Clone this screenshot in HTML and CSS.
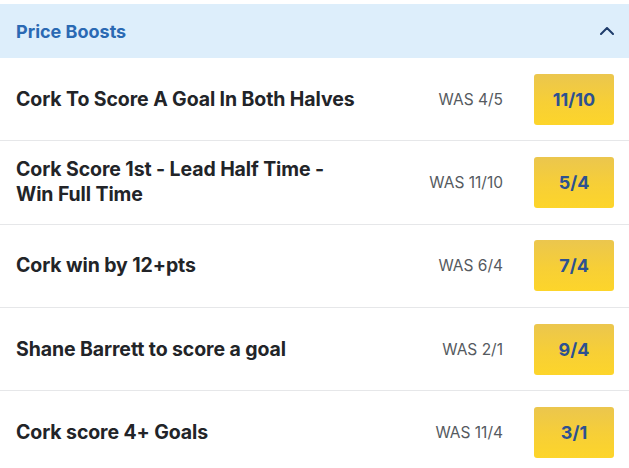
FILE: index.html
```html
<!DOCTYPE html>
<html lang="en">
<head>
<meta charset="utf-8">
<title>Price Boosts</title>
<link rel="stylesheet" href="styles.css">
</head>
<body>
<section class="panel">
  <header class="panel-head">
    <h2 class="panel-title">Price Boosts</h2>
    <svg class="chevron" width="14" height="8" viewBox="0 0 14 8" aria-hidden="true">
      <polyline points="1,7 7,1 13,7" fill="none" stroke="#1f3d6b" stroke-width="2" stroke-linecap="round" stroke-linejoin="round"/>
    </svg>
  </header>
  <ul class="boosts">
    <li class="boost">
      <span class="boost-name">Cork To Score A Goal In Both Halves</span>
      <span class="boost-was">WAS 4/5</span>
      <button class="boost-odds">11/10</button>
    </li>
    <li class="boost">
      <span class="boost-name">Cork Score 1st - Lead Half Time - Win Full Time</span>
      <span class="boost-was">WAS 11/10</span>
      <button class="boost-odds">5/4</button>
    </li>
    <li class="boost">
      <span class="boost-name">Cork win by 12+pts</span>
      <span class="boost-was">WAS 6/4</span>
      <button class="boost-odds">7/4</button>
    </li>
    <li class="boost">
      <span class="boost-name">Shane Barrett to score a goal</span>
      <span class="boost-was">WAS 2/1</span>
      <button class="boost-odds">9/4</button>
    </li>
    <li class="boost">
      <span class="boost-name">Cork score 4+ Goals</span>
      <span class="boost-was">WAS 11/4</span>
      <button class="boost-odds">3/1</button>
    </li>
  </ul>
</section>
</body>
</html>
```
FILE: styles.css
```css
* { box-sizing: border-box; }
html, body { margin: 0; padding: 0; background: #ffffff; }
body {
  font-family: Inter, "Noto Sans", "Liberation Sans", sans-serif;
  color: #222428;
  padding-top: 4px;
}
.panel { width: 629px; }
.panel-head {
  height: 54px;
  background: #ddeefb;
  display: flex;
  align-items: center;
  justify-content: space-between;
  padding: 0 15px 0 16px;
}
.panel-title {
  margin: 0;
  font-size: 18px;
  font-weight: 700;
  color: #2a69b3;
}
.chevron { display: block; }
.boosts { list-style: none; margin: 0; padding: 0; }
.boost {
  height: 83.3px;
  border-bottom: 1px solid #e6e7e9;
  display: flex;
  align-items: center;
  padding: 0 15px 0 16px;
}
.boost-name {
  flex: 1;
  max-width: 345px;
  font-size: 19.5px;
  font-weight: 700;
  line-height: 25px;
  color: #222428;
  letter-spacing: -0.1px;
}
.boost-was {
  margin-left: auto;
  font-size: 15.5px;
  color: #555a60;
  margin-right: 31px;
}
.boost-odds {
  width: 80px;
  height: 51px;
  border: none;
  border-radius: 3px;
  background: linear-gradient(180deg, #ebc64e 0%, #f7cf36 55%, #fdd52a 100%);
  font-family: inherit;
  font-size: 18px;
  font-weight: 700;
  color: #2d5191;
  padding: 0;
}
```
